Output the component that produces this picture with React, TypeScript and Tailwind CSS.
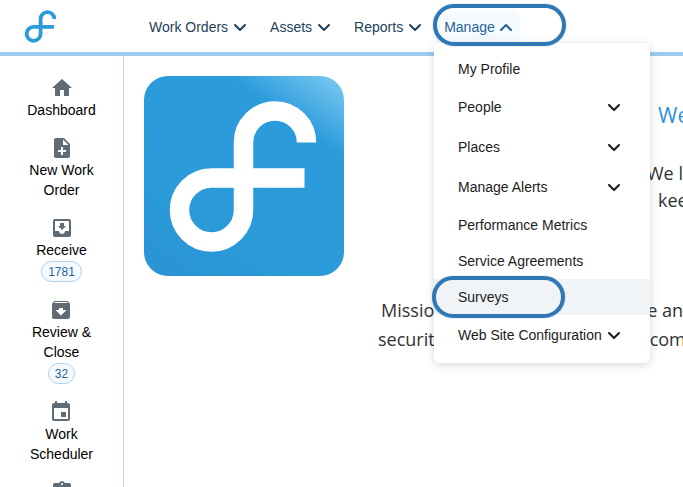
import React from "react";

const Chevron = ({ up = false, className = "" }: { up?: boolean; className?: string }) => (
  <svg width="14" height="9" viewBox="0 0 14 9" fill="none" stroke="currentColor" strokeWidth="2.1" strokeLinecap="round" strokeLinejoin="round" className={className}>
    <polyline points={up ? "2,7 7,2 12,7" : "2,2 7,7 12,2"} />
  </svg>
);

const LogoPath = ({ width }: { width: number }) => (
  <path d="M162.5 66.5A31.5 31.5 0 0 0 99.5 66.5V134A32 32 0 1 1 67.5 102H160.5" fill="none" stroke="currentColor" strokeWidth={width} />
);

const Icon = ({ d }: { d: string }) => (
  <svg width="24" height="24" viewBox="0 0 24 24" className="text-[#5f6b75] shrink-0" fill="currentColor">
    <path d={d} />
  </svg>
);

const icons = {
  home: "M10 20v-6h4v6h5v-8h3L12 3 2 12h3v8z",
  note: "M14 2H6c-1.1 0-1.99.9-1.99 2L4 20c0 1.1.89 2 1.99 2H18c1.1 0 2-.9 2-2V8l-6-6zm2 14h-3v3h-2v-3H8v-2h3v-3h2v3h3v2zm-3-7V3.5L18.5 9H13z",
  inbox: "M19 3H4.99c-1.11 0-1.98.89-1.98 2L3 19c0 1.1.88 2 1.99 2H19c1.1 0 2-.9 2-2V5c0-1.11-.9-2-2-2zm0 12h-4c0 1.66-1.35 3-3 3s-3-1.34-3-3H4.99V5H19v10zm-3-5h-2V7h-4v3H8l4 4 4-4z",
  archive: "M20.54 5.23l-1.39-1.68C18.88 3.21 18.47 3 18 3H6c-.47 0-.88.21-1.16.55L3.46 5.23C3.17 5.57 3 6.02 3 6.5V19c0 1.1.9 2 2 2h14c1.1 0 2-.9 2-2V6.5c0-.48-.17-.93-.46-1.27zM12 17.5L6.5 12H10v-2h4v2h3.5L12 17.5zM5.12 5l.81-1h12l.94 1H5.12z",
  event: "M17 12h-5v5h5v-5zM16 1v2H8V1H6v2H5c-1.11 0-1.99.9-1.99 2L3 19c0 1.1.89 2 2 2h14c1.1 0 2-.9 2-2V5c0-1.1-.9-2-2-2h-1V1h-2zm3 18H5V8h14v11z",
  clip: "M19 3h-4.18C14.4 1.84 13.3 1 12 1c-1.3 0-2.4.84-2.82 2H5c-1.1 0-2 .9-2 2v14c0 1.1.9 2 2 2h14c1.1 0 2-.9 2-2V5c0-1.1-.9-2-2-2zm-7 0c.55 0 1 .45 1 1s-.45 1-1 1-1-.45-1-1 .45-1 1-1z",
};

const side: { icon: string; lines: string[]; badge?: string }[] = [
  { icon: icons.home, lines: ["Dashboard"] },
  { icon: icons.note, lines: ["New Work", "Order"] },
  { icon: icons.inbox, lines: ["Receive"], badge: "1781" },
  { icon: icons.archive, lines: ["Review &", "Close"], badge: "32" },
  { icon: icons.event, lines: ["Work", "Scheduler"] },
  { icon: icons.clip, lines: [] },
];

const menu: { label: string; sub?: boolean; active?: boolean }[] = [
  { label: "My Profile" },
  { label: "People", sub: true },
  { label: "Places", sub: true },
  { label: "Manage Alerts", sub: true },
  { label: "Performance Metrics" },
  { label: "Service Agreements" },
  { label: "Surveys", active: true },
  { label: "Web Site Configuration", sub: true },
];

export default function App() {
  return (
    <div className="relative h-[487px] w-[683px] overflow-hidden bg-white font-['Liberation_Sans',Arial,sans-serif]">
      <header className="flex h-[56px] items-center border-b-4 border-[#9ccbee] bg-white">
        <svg width="33" height="33" viewBox="25 25 148 151" className="ml-[24px] text-[#2b9bdc]">
          <LogoPath width={17.5} />
        </svg>
        <nav className="ml-[92px] mt-[2px] flex items-center text-[14px] text-[#23415a]">
          <span className="flex items-center gap-[5px]">Work Orders <Chevron /></span>
          <span className="ml-[23px] flex items-center gap-[5px]">Assets <Chevron /></span>
          <span className="ml-[23px] flex items-center gap-[5px]">Reports <Chevron /></span>
          <span className="ml-[10px] flex h-[32px] w-[88px] items-center gap-[4px] rounded-lg bg-[#f5faff] pl-[12px] text-[#2a6296]">Manage <Chevron up /></span>
        </nav>
      </header>

      <div className="flex h-[431px]">
        <aside className="flex w-[124px] shrink-0 flex-col items-center gap-4 border-r border-[#c9d3dc] pt-[20px] text-[14px] leading-[20px] text-black">
          {side.map((s) => (
            <div key={s.icon} className="flex flex-col items-center text-center">
              <Icon d={s.icon} />
              {s.lines.map((l) => (
                <div key={l}>{l}</div>
              ))}
              {s.badge && (
                <div className="mt-px flex h-[21px] items-center rounded-full border border-[#a9d2f3] bg-[#f5faff] px-[6px] text-[12px] text-[#2a6296]">
                  {s.badge}
                </div>
              )}
            </div>
          ))}
        </aside>

        <main className="flex min-w-0 flex-1">
          <div className="ml-[20px] mt-[20px] h-[200px] w-[200px] shrink-0 overflow-hidden rounded-[24px] bg-[linear-gradient(215deg,#7fcbf2_0%,#2b9bdc_24%,#2a9ad9_70%,#2a93d4_100%)] text-white">
            <svg width="200" height="200" viewBox="0 0 200 200">
              <LogoPath width={19.5} />
            </svg>
          </div>
          <div className="whitespace-nowrap font-['Open_Sans',sans-serif] text-[#333]">
            <div className="pl-[314px] pt-[44px] text-[21px] leading-[30px] text-[#2f8fdd]">We</div>
            <div className="pl-[303px] pt-[30px] text-[18px] leading-[27px]">We l</div>
            <div className="pl-[314px] text-[18px] leading-[27px]">kee</div>
            <div className="flex pl-[37px] pt-[82px] text-[18px] leading-[29px]">
              <span>Missio</span>
              <span className="ml-[213px]">e an</span>
            </div>
            <div className="flex pl-[34px] text-[18px] leading-[29px]">
              <span>securit</span>
              <span className="ml-[215px]">com</span>
            </div>
          </div>
        </main>
      </div>

      <div className="absolute left-[434px] top-[43px] w-[216px] rounded-[5px] bg-white py-2 text-[14px] text-[#1c1c1c] shadow-[0_2px_10px_rgba(0,0,0,0.16)]">
        {menu.map((m) => (
          <div
            key={m.label}
            className={`flex items-center justify-between pl-[24px] pr-[29px] ${m.sub ? "h-[40px]" : "h-[36px]"} ${m.active ? "bg-[#f1f4f6]" : ""}`}
          >
            <span>{m.label}</span>
            {m.sub && <Chevron />}
          </div>
        ))}
      </div>

      <div className="absolute left-[433px] top-[4px] h-[42px] w-[133px] rounded-full border-[4px] border-[#2f78b5] shadow-[0_0_1px_#2f78b5]" />
      <div className="absolute left-[432px] top-[276px] h-[42px] w-[133px] rounded-full border-[4px] border-[#2f78b5] shadow-[0_0_1px_#2f78b5]" />
    </div>
  );
}
